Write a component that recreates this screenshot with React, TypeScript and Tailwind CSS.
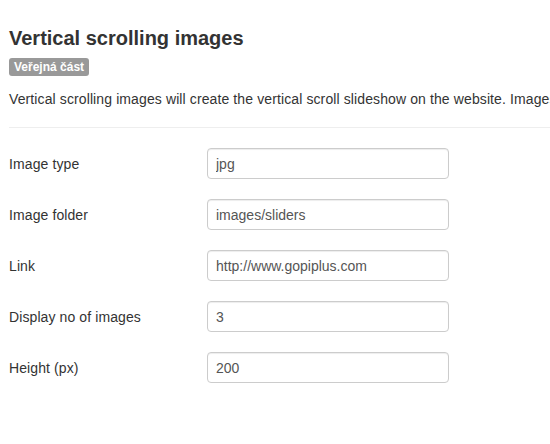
const fields = [
  { label: 'Image type', value: 'jpg' },
  { label: 'Image folder', value: 'images/sliders' },
  { label: 'Link', value: 'http://www.gopiplus.com' },
  { label: 'Display no of images', value: '3' },
  { label: 'Height (px)', value: '200' },
];

export default function App() {
  return (
    <div className="h-[444px] w-[550px] overflow-hidden bg-white pl-[9px] pt-[26px] font-['Liberation_Sans',Arial,sans-serif] text-[#333]">
      <h1 className="whitespace-nowrap text-[20px] font-bold leading-[24px]">Vertical scrolling images</h1>
      <div className="mt-[4px]">
        <span className="inline-block rounded-[3px] bg-[#999] px-[5px] text-[12px] font-bold leading-[18px] text-white">
          Veřejná část
        </span>
      </div>
      <p className="mt-[11px] whitespace-nowrap text-[14px] leading-[20px] tracking-[0.11px]">
        Vertical scrolling images will create the vertical scroll slideshow on the website. Images
      </p>
      <hr className="mt-[18px] border-t border-[#eee]" />
      <div className="mt-[20px] flex flex-col gap-[20px]">
        {fields.map((f) => (
          <div key={f.label} className="flex items-center">
            <label className="w-[198px] text-[14px] leading-[20px] tracking-[0.1px]">{f.label}</label>
            <input
              readOnly
              value={f.value}
              className="h-[31px] w-[242px] rounded-[4px] border border-[#ccc] px-[8px] text-[14px] text-[#555] shadow-[inset_0_1px_1px_rgba(0,0,0,0.075)] outline-none"
            />
          </div>
        ))}
      </div>
    </div>
  );
}
